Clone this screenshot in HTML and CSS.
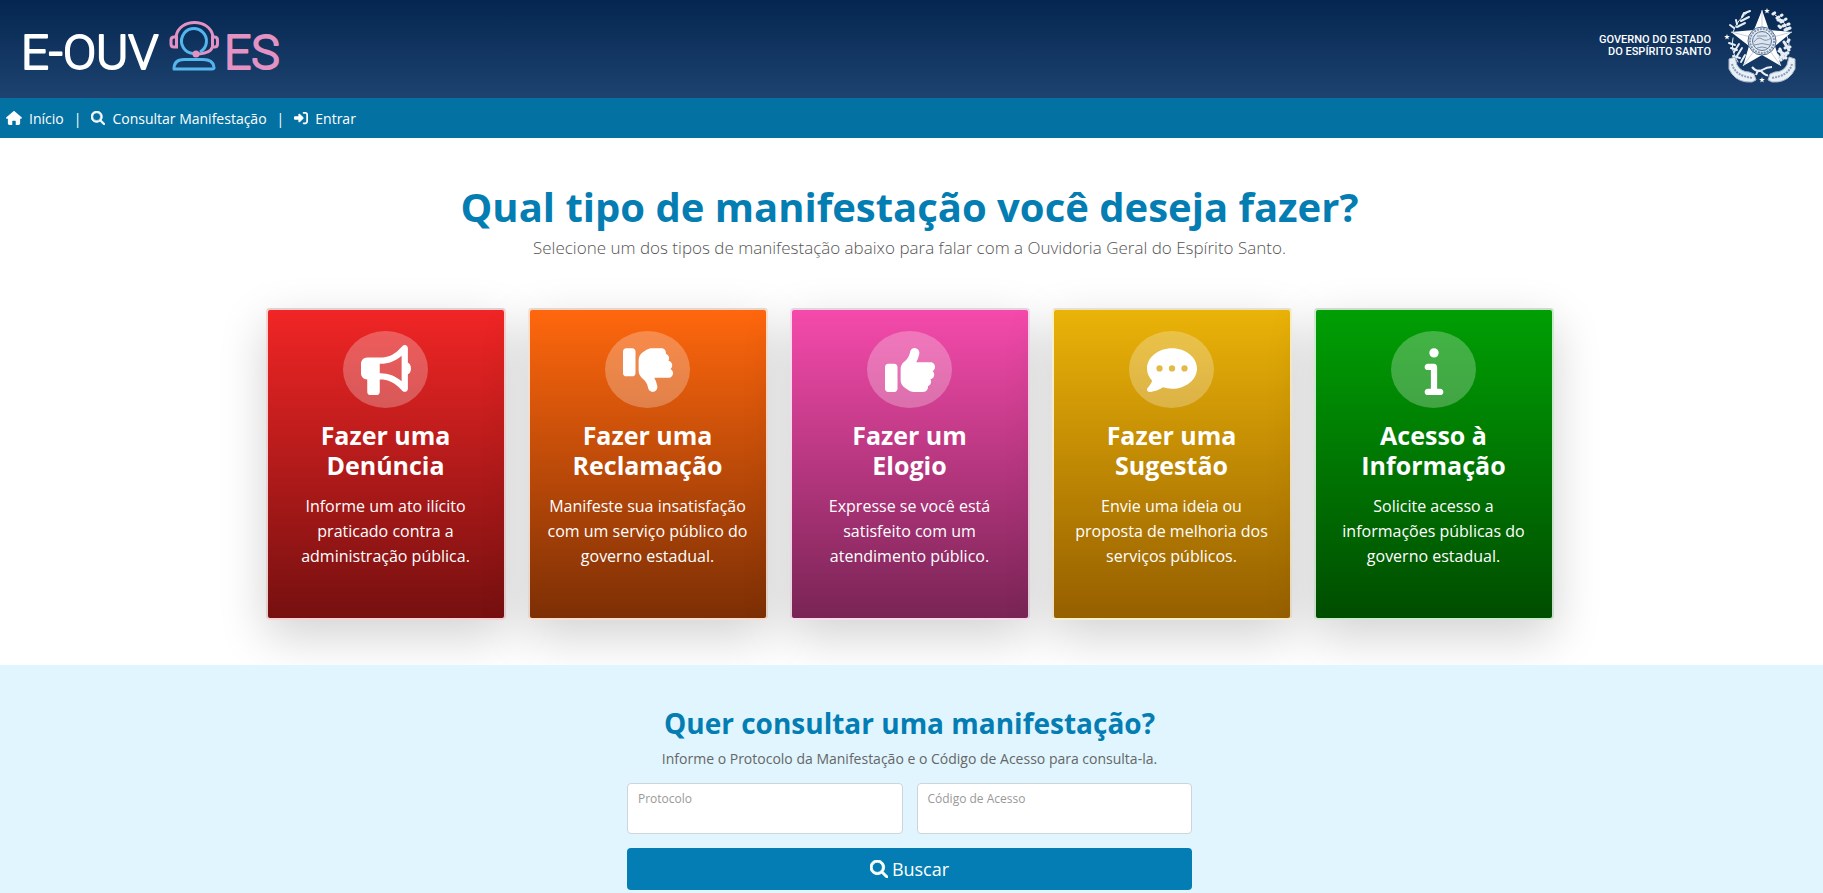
FILE: index.html
```html
<!DOCTYPE html>
<html lang="pt-BR">
<head>
<meta charset="utf-8">
<meta name="viewport" content="width=device-width, initial-scale=1">
<title>E-OUV ES</title>
<link rel="stylesheet" href="styles.css">
</head>
<body>
<svg class="sprite" aria-hidden="true">
  <symbol id="search" viewBox="0 0 512 512"><path d="M416 208c0 45.900-14.900 88.300-40 122.700L502.600 457.400c12.500 12.500 12.500 32.800 0 45.300s-32.800 12.500-45.300 0L330.700 376c-34.400 25.200-76.800 40-122.700 40C93.100 416 0 322.900 0 208S93.100 0 208 0S416 93.100 416 208zM208 352a144 144 0 1 0 0-288 144 144 0 1 0 0 288z" stroke="currentColor" stroke-width="24"/></symbol>
  <symbol id="thumb" viewBox="0 0 512 512"><path d="M313.400 32.900c26 5.200 42.900 30.500 37.700 56.500l-2.300 11.400c-5.300 26.700-15.100 52.100-28.800 75.200H464c26.500 0 48 21.500 48 48c0 18.500-10.500 34.600-25.900 42.600C497 275.400 504 288.900 504 304c0 23.400-16.800 42.900-38.900 47.100c4.400 7.300 6.900 15.800 6.900 24.900c0 21.300-13.900 39.400-33.100 45.600c.7 3.300 1.100 6.800 1.100 10.400c0 26.500-21.500 48-48 48H294.500c-19 0-37.500-5.600-53.300-16.100l-38.500-25.700C176 420.400 160 390.400 160 358.300V320 272 247.100c0-29.200 13.300-56.700 36-75l7.400-5.900c26.500-21.200 44.600-51 51.200-84.200l2.300-11.400c5.200-26 30.500-42.900 56.500-37.700zM32 192H96c17.700 0 32 14.300 32 32V448c0 17.700-14.300 32-32 32H32c-17.700 0-32-14.300-32-32V224c0-17.700 14.300-32 32-32z"/></symbol>
  <symbol id="star" viewBox="-10 -10 20 20"><path d="M0-10 2.400-3.300 9.500-3.100 3.900 1.300 5.900 8.100 0 4-5.900 8.100-3.900 1.300-9.500-3.100-2.400-3.300z"/></symbol>
</svg>

<header class="header">
  <a class="brand" href="#" aria-label="E-OUV ES">
    <svg class="brand-logo" viewBox="0 0 260 52">
      <text class="brand-text" x="-2" y="48">E-OUV</text>
      <g transform="translate(147)" fill="none" stroke-width="3">
        <path stroke="#e393c3" d="M6 15C8 6 16 1.500 24.500 1.500S41 6 43 15M6 16H4Q1 16 1 19V23Q1 26 4 26H6.500V16ZM43 16H44.500Q47.500 16 47.500 19V23Q47.500 26 44.500 26H42.500V16ZM42.500 26Q40.500 32 29 33"/>
        <path stroke="#55b6ee" d="M23 32.500A12.500 12.500 0 1 1 30 31"/>
        <path stroke="#55b6ee" d="M4 48Q4 38.500 14 38.500H33Q43 38.500 44 46Q44.500 48 42 48Z" stroke-linejoin="round"/>
        <circle cx="26" cy="33" r="3.500" fill="#e393c3" stroke="none"/>
      </g>
      <text class="brand-text brand-pink" x="201" y="48">ES</text>
    </svg>
  </a>
  <div class="gov">
    <p class="gov-text">GOVERNO DO ESTADO<br>DO ESPÍRITO SANTO</p>
    <svg class="crest" viewBox="0 0 76 78" role="img" aria-label="Brasão do Espírito Santo">
      <g fill="none" stroke="#e6edf5" stroke-linecap="round">
        <path d="M15 54Q7 42 10 30M10 24Q14 12 25 4M60 52Q70 40 64 28M64 22Q62 12 52 7" stroke-width="1"/>
        <path d="M22 5 27 3M19 9 21 5M18 13 26 9M14 16 13 12M14 19 22 15M11 20 7 17M6 35 12 37M8 40 14 42M16 36 11 44M19 40 14 48M10 48 17 50M22 47 18 54" stroke-width="2"/>
        <path d="M54 10 59 7M58 14 63 11M60 18 66 16M56 18 59 21M66 32 63 36M67 39 62 40M65 45 60 45M57 41 60 49M54 47 58 52M50 6 53 4" stroke-width="3" stroke-dasharray="2 3"/>
        <path d="M55 12 60 13M62 22 67 20M61 34 66 42M56 43 63 47M63 50 58 49" stroke-width="3"/>
      </g>
      <path fill="#fff" d="m39 2 7 20 23 2-17 14 6 20-19-11-19 11 6-20L8 24l23-2z"/>
      <path d="M39 2v20M69 24 50 29M58 58 47 43M20 58l11-15M8 24l20 5" stroke="#c4d1e1" fill="none"/>
      <circle cx="39" cy="33" r="14" fill="#e8eef5" stroke="#4d698d"/>
      <circle cx="39" cy="33" r="12" fill="none" stroke="#8195b0" stroke-width="2" stroke-dasharray="2 1"/>
      <circle cx="39" cy="33" r="9.500" fill="#dce4ee" stroke="#5b7596"/>
      <path d="M31 34q4-6 8-3t9-1M31 37q8-3 16 0M34 40q5-2 10 0M34 28h10" fill="none" stroke="#7c92ae"/>
      <g fill="#e9eff6" stroke="#a9bacf" stroke-width="1">
        <path d="M6 51 12 49 14 57Q18 64 26 64L31 66 33 72 29 74Q16 75 9 66L6 61Z"/>
        <path d="M72 51 66 49 64 57Q60 64 52 64L47 66 45 72 49 74Q62 75 69 66L72 61Z"/>
      </g>
      <path d="M9 56q3 12 21 14M69 56q-3 12-21 14" fill="none" stroke="#8a9eb8" stroke-width="2" stroke-dasharray="2 1"/>
      <path d="M29 59q5 6 10 3t10-3M33 67q2-7 6-3t6 3" fill="none" stroke="#e9eff6" stroke-width="2"/>
      <g fill="#fff"><use href="#star" x="41" y="0" width="6" height="6"/><use href="#star" x="1" y="26" width="6" height="6"/><use href="#star" x="36" y="69" width="6" height="6"/></g>
    </svg>
  </div>
</header>

<nav class="nav" aria-label="Principal">
  <a href="#"><svg class="nav-icon home" viewBox="0 0 576 512" aria-hidden="true"><path d="M575.800 255.500c0 18-15 32.100-32 32.100h-32l.7 160.200c0 35-28 64.200-64 64.200H352V376c0-14-10-24-24-24h-80c-14 0-24 10-24 24v136H128c-36 0-64-29-64-64V287.600H32c-18 0-32-14-32-32.100 0-9 3-17 10-24L266.400 8c7-7 15-8 22-8s15 2 21 7l255.400 224.500c8 7 12 15 11 24z"/></svg>Início</a>
  <span class="sep">|</span>
  <a href="#"><svg class="nav-icon" aria-hidden="true"><use href="#search"/></svg>Consultar Manifestação</a>
  <span class="sep">|</span>
  <a href="#"><svg class="nav-icon" viewBox="0 0 512 512" aria-hidden="true"><path d="M217.900 105.900L340.700 228.700c15 15 15 39.600 0 54.600L217.900 406.100c-16 16-57.900 11-57.900-24.200V320H32c-18 0-32-14-32-32V224c0-18 14-32 32-32H160V130.100c0-35 42-40 57.900-24.200zM352 416H416c18 0 32-14 32-32V128c0-18-14-32-32-32H352c-43 0-43-64 0-64H416c53 0 96 43 96 96V384c0 53-43 96-96 96H352c-43 0-43-64 0-64z"/></svg>Entrar</a>
</nav>

<main>
  <section class="types">
    <h1>Qual tipo de manifestação você deseja fazer?</h1>
    <p class="lead">Selecione um dos tipos de manifestação abaixo para falar com a Ouvidoria Geral do Espírito Santo.</p>
    <div class="cards">
      <a class="card red" href="#">
        <span class="disc"><svg viewBox="0 0 512 512" aria-hidden="true"><path d="M480 32c0-12.900-7.800-24.600-19.800-29.600s-25.700-2.200-34.900 6.900L381.700 53c-48 48-113.100 75-181 75H64c-35.300 0-64 28.700-64 64v96c0 35.300 28.700 64 64 64V480c0 17.700 14.300 32 32 32h64c17.700 0 32-14.300 32-32V352l8.700 0c67.900 0 133 27 181 75l43.600 43.600c9.200 9.200 22.900 11.900 34.900 6.900s19.800-16.600 19.800-29.600V300.400c18.600-8.800 32-32.500 32-60.400s-13.400-51.600-32-60.400V32zM416 109.300V371.300C357.200 317.800 280.500 288 200.700 288H192V192h8.700c79.800 0 156.500-29.800 215.300-82.700z"/></svg></span>
        <h2>Fazer uma Denúncia</h2>
        <p>Informe um ato ilícito praticado contra a administração pública.</p>
      </a>
      <a class="card orange" href="#">
        <span class="disc"><svg class="down" aria-hidden="true"><use href="#thumb"/></svg></span>
        <h2>Fazer uma Reclamação</h2>
        <p>Manifeste sua insatisfação com um serviço público do governo estadual.</p>
      </a>
      <a class="card pink" href="#">
        <span class="disc"><svg aria-hidden="true"><use href="#thumb"/></svg></span>
        <h2>Fazer um Elogio</h2>
        <p>Expresse se você está satisfeito com um atendimento público.</p>
      </a>
      <a class="card gold" href="#">
        <span class="disc"><svg viewBox="0 0 512 512" aria-hidden="true"><path fill-rule="evenodd" d="M256 32C114.600 32 0 125 0 240c0 47.600 19.900 91.200 52.900 126.300C38 405.700 7 439.100 6.500 439.500c-6.600 7-8.400 17.200-4.600 26S14.400 480 24 480c61.500 0 110-25.700 139.100-46.300C192 442.800 223.200 448 256 448c141.400 0 256-93 256-208S397.400 32 256 32zM128 208a32 32 0 1 1 0 64a32 32 0 1 1 0-64zm128 0a32 32 0 1 1 0 64a32 32 0 1 1 0-64zm128 0a32 32 0 1 1 0 64a32 32 0 1 1 0-64z"/></svg></span>
        <h2>Fazer uma Sugestão</h2>
        <p>Envie uma ideia ou proposta de melhoria dos serviços públicos.</p>
      </a>
      <a class="card green" href="#">
        <span class="disc"><svg viewBox="-160 0 512 512" aria-hidden="true"><path d="M48 80a48 48 0 1 1 96 0A48 48 0 1 1 48 80zM0 224c0-17.700 14.300-32 32-32H96c17.700 0 32 14.300 32 32V448h32c17.700 0 32 14.300 32 32s-14.300 32-32 32H32c-17.700 0-32-14.300-32-32s14.300-32 32-32H64V256H32c-17.700 0-32-14.300-32-32z"/></svg></span>
        <h2>Acesso à Informação</h2>
        <p>Solicite acesso a informações públicas do governo estadual.</p>
      </a>
    </div>
  </section>

  <section class="lookup">
    <h2>Quer consultar uma manifestação?</h2>
    <p>Informe o Protocolo da Manifestação e o Código de Acesso para consulta-la.</p>
    <form class="form">
      <div class="field"><label for="protocolo">Protocolo</label><input id="protocolo" type="text"></div>
      <div class="field"><label for="codigo">Código de Acesso</label><input id="codigo" type="text"></div>
      <button type="submit"><svg aria-hidden="true"><use href="#search"/></svg>Buscar</button>
    </form>
  </section>
</main>
</body>
</html>
```

FILE: styles.css
```css
* { box-sizing: border-box; }
body {
  margin: 0;
  min-height: 100vh;
  display: flex;
  flex-direction: column;
  font-family: "Open Sans", "Noto Sans", sans-serif;
  color: #555;
  background: #fff;
}
h1, h2, p { margin: 0; }
a { color: inherit; text-decoration: none; }
svg { fill: currentColor; overflow: visible; }
.sprite { position: absolute; width: 0; height: 0; }

.header {
  display: flex;
  justify-content: space-between;
  align-items: flex-start;
  height: 98px;
  padding: 8px 24px 0 23px;
  background: linear-gradient(#042650, #1e4370);
  color: #fff;
}
.brand { padding-top: 13px; }
.brand-logo { display: block; width: 260px; height: 52px; }
.brand-text {
  font: 300 49px Roboto, sans-serif;
  fill: #fff;
  stroke: #fff;
  stroke-width: 2px;
  stroke-linejoin: round;
}
.brand-pink { font-size: 48px; fill: #e393c3; stroke: #e393c3; }
.gov { display: flex; align-items: flex-start; gap: 12px; }
.gov-text {
  padding-top: 26px;
  font: 500 11px/12px Roboto, sans-serif;
  text-align: right;
}
.crest { width: 76px; height: 78px; }

.nav {
  display: flex;
  align-items: center;
  gap: 10px;
  height: 40px;
  padding: 0 6px;
  background: #0471a3;
  color: #fff;
  font-size: 14px;
  font-weight: 500;
}
.nav a { display: flex; align-items: center; gap: 7px; }
.nav-icon { width: 14px; height: 14px; }
.nav-icon.home { width: 16px; }

main { flex: 1; display: flex; flex-direction: column; }
.types { padding: 41px 4px 45px 0; text-align: center; }
.types h1 {
  color: #047db3;
  font-size: 40px;
  line-height: 56px;
  font-weight: 700;
}
.lead { font-size: 17px; line-height: 26px; font-weight: 300; }
.cards {
  display: grid;
  grid-template-columns: repeat(5, minmax(0, 1fr));
  gap: 22px;
  max-width: 1288px;
  margin: 47px auto 0;
}
.card {
  min-height: 312px;
  padding: 21px 12px 48px;
  border: 2px solid rgba(255, 255, 255, .8);
  border-radius: 4px;
  color: #fff;
  box-shadow: 0 16px 48px rgba(0, 0, 0, .18);
}
.red { background: linear-gradient(#f12525, #761010); }
.orange { background: linear-gradient(#ff670d, #7d2f05); }
.pink { background: linear-gradient(#f54aab, #792455); }
.gold { background: linear-gradient(#eab308, #965f00); }
.green { background: linear-gradient(#009f04, #004d00); }
.disc {
  display: flex;
  align-items: center;
  justify-content: center;
  width: 85px;
  height: 77px;
  margin: 0 auto 12px;
  border-radius: 50%;
  background: rgba(255, 255, 255, .26);
}
.disc svg { width: 50px; height: 50px; }
.disc .down { transform: scaleY(-1); }
.card h2 { max-width: 160px; margin: 0 auto 14px; font-size: 25px; line-height: 30px; font-weight: 700; }
.card p { font-size: 16px; line-height: 25px; font-weight: 500; }

.lookup {
  flex: 1;
  padding: 38px 4px 3px 0;
  background: #e0f5fe;
  text-align: center;
}
.lookup h2 { color: #047db3; font-size: 28px; line-height: 40px; font-weight: 700; }
.lookup p { padding-top: 5px; font-size: 14px; line-height: 22px; color: #666; }
.form {
  display: grid;
  grid-template-columns: 1fr 1fr;
  gap: 14px;
  max-width: 565px;
  margin: 13px auto 0;
}
.field {
  display: flex;
  flex-direction: column;
  height: 51px;
  padding: 6px 10px;
  border: 1px solid #ced4da;
  border-radius: 4px;
  background: #fff;
  text-align: left;
}
.field label { color: #999; font-size: 12px; line-height: 18px; }
.field input { width: 100%; min-height: 0; flex: 1; padding: 0; border: 0; outline: 0; background: transparent; font: inherit; }
.form button {
  grid-column: 1 / -1;
  display: flex;
  align-items: center;
  justify-content: center;
  gap: 4px;
  height: 42px;
  border: 0;
  border-radius: 4px;
  background: #037db3;
  color: #fff;
  font: 500 18px/27px "Open Sans", "Noto Sans", sans-serif;
}
.form button svg { width: 18px; height: 18px; }
```
